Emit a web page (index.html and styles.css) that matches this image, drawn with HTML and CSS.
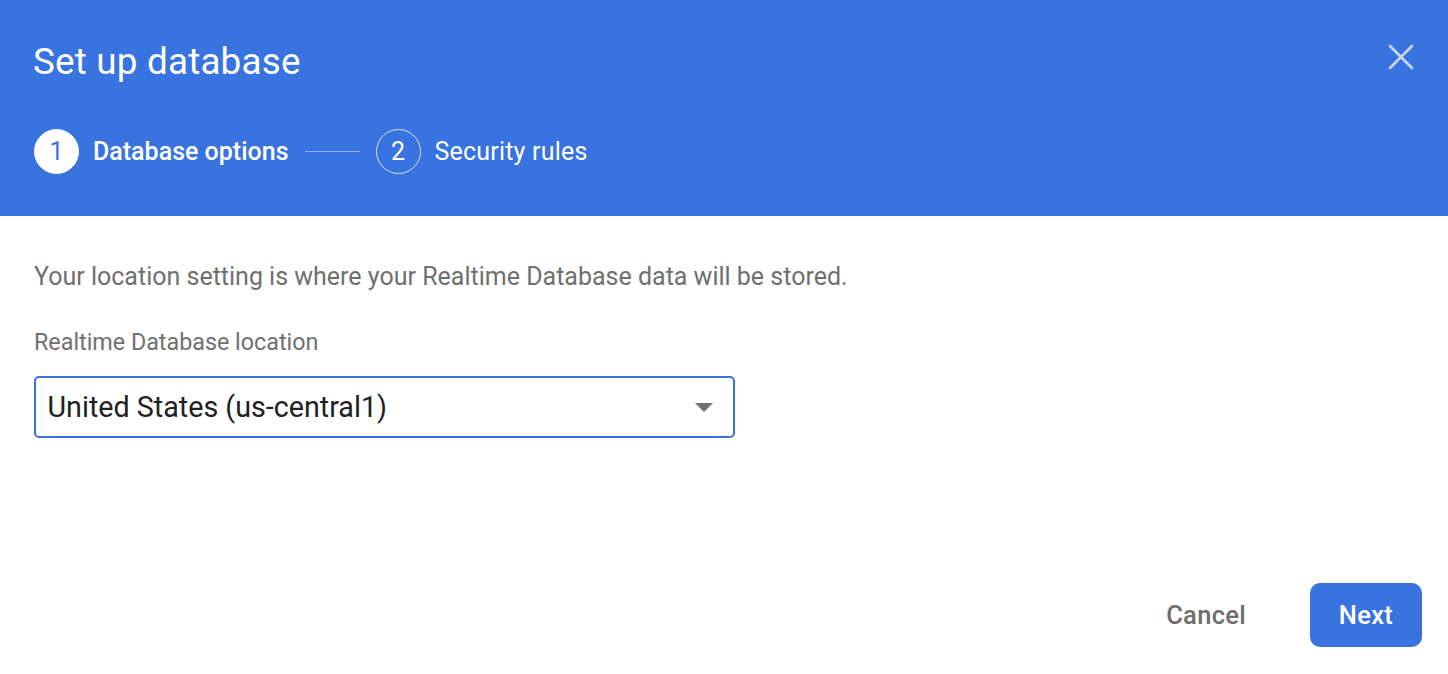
FILE: index.html
```html
<!DOCTYPE html>
<html>
<head>
<meta charset="utf-8">
<link rel="stylesheet" href="styles.css">
</head>
<body>
<div class="dialog">
  <header class="header">
    <div class="title-row">
      <h1 class="title">Set up database</h1>
      <button class="close" aria-label="Close">
        <svg width="26" height="26" viewBox="0 0 26 26"><path d="M2 2L24 24M24 2L2 24" stroke="currentColor" stroke-width="2.6" stroke-linecap="round"/></svg>
      </button>
    </div>
    <div class="steps">
      <div class="step active"><span class="num">1</span><span class="label">Database options</span></div>
      <div class="connector"></div>
      <div class="step"><span class="num">2</span><span class="label">Security rules</span></div>
    </div>
  </header>
  <main class="content">
    <p class="desc">Your location setting is where your Realtime Database data will be stored.</p>
    <div class="field-label">Realtime Database location</div>
    <div class="select">
      <span class="value">United States (us-central1)</span>
      <span class="arrow"></span>
    </div>
  </main>
  <footer class="actions">
    <button class="btn cancel">Cancel</button>
    <button class="btn next">Next</button>
  </footer>
</div>
</body>
</html>
```
FILE: styles.css
```css
html, body {
  margin: 0;
  padding: 0;
  height: 100%;
  background: #ffffff;
  font-family: Roboto, "Liberation Sans", Arial, sans-serif;
}
.dialog {
  display: flex;
  flex-direction: column;
  height: 100vh;
}
.header {
  background: #3873df;
  color: #ffffff;
  padding: 41px 26px 41px 33px;
  height: 216px;
  box-sizing: border-box;
}
.title-row {
  display: flex;
  align-items: center;
  justify-content: space-between;
  height: 42px;
}
.title {
  margin: 0;
  font-size: 36.8px;
  font-weight: 400;
  line-height: 42px;
  letter-spacing: 0.2px;
}
.close {
  background: none;
  border: none;
  padding: 0;
  margin-right: 8px;
  margin-top: -10px;
  color: #c9d8f6;
  width: 26px;
  height: 26px;
  display: flex;
}
.steps {
  display: flex;
  align-items: center;
  margin-top: 45px;
  height: 46px;
  padding-left: 1px;
}
.step {
  display: flex;
  align-items: center;
}
.num {
  width: 45px;
  height: 45px;
  box-sizing: border-box;
  border-radius: 50%;
  border: 1px solid #d8e3f8;
  display: flex;
  align-items: center;
  justify-content: center;
  font-size: 25px;
  font-weight: 400;
  color: #ffffff;
}
.step.active .num {
  background: #ffffff;
  color: #3873df;
  border-color: #ffffff;
}
.label {
  margin-left: 14px;
  font-size: 25px;
  font-weight: 400;
}
.step.active .label {
  font-weight: 500;
}
.step:last-child .label {
  letter-spacing: 0.2px;
}
.connector {
  width: 55px;
  height: 1px;
  background: #8eaef0;
  margin: 0 16px;
}
.content {
  padding: 45px 34px 0;
}
.desc {
  margin: 0;
  font-size: 25px;
  line-height: 32px;
  color: #6f6f6f;
}
.field-label {
  margin-top: 34px;
  font-size: 23.3px;
  line-height: 30px;
  color: #707070;
}
.select {
  margin-top: 19px;
  width: 701px;
  height: 62px;
  box-sizing: border-box;
  border: 2.5px solid #3873df;
  border-radius: 5px;
  display: flex;
  align-items: center;
  justify-content: space-between;
  padding: 0 20px 0 11.5px;
}
.value {
  font-size: 28.7px;
  color: #212121;
}
.arrow {
  width: 0;
  height: 0;
  border-left: 9px solid transparent;
  border-right: 9px solid transparent;
  border-top: 9px solid #6e6e6e;
}
.actions {
  margin-top: auto;
  display: flex;
  justify-content: flex-end;
  align-items: center;
  gap: 42px;
  padding: 0 26px 27px 0;
}
.btn {
  font-family: Roboto, "Liberation Sans", Arial, sans-serif;
  font-size: 25.5px;
  font-weight: 500;
  border: none;
  background: none;
  height: 64px;
  border-radius: 10px;
  letter-spacing: 0.3px;
}
.cancel {
  color: #6e6e6e;
  padding: 0 22px;
}
.next {
  background: #3873df;
  color: #ffffff;
  width: 112px;
}
```
